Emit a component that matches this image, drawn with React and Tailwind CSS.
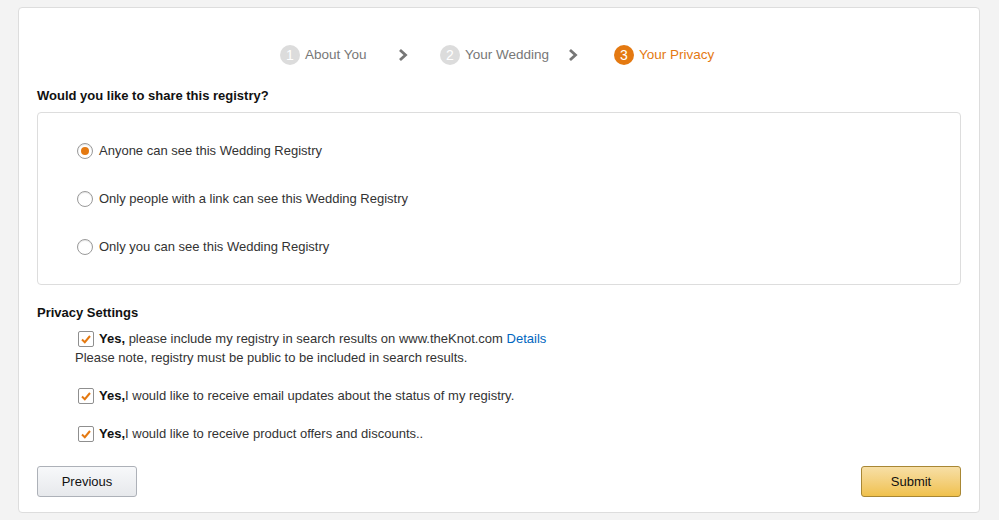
import React from "react";

const font = { fontFamily: '"Liberation Sans", Arial, sans-serif' };

function Chevron() {
  return (
    <svg width="10" height="14" viewBox="0 0 10 14" className="block">
      <polyline points="2,2 7.5,7 2,12" fill="none" stroke="#767676" strokeWidth="2.8" />
    </svg>
  );
}

function Radio({ checked }) {
  return (
    <span className="flex h-[16px] w-[16px] items-center justify-center rounded-full border border-[#9a9a9a] bg-white shadow-[inset_0_1px_1px_rgba(0,0,0,0.1)]">
      {checked && <span className="h-[8px] w-[8px] rounded-full bg-[#e47911]" />}
    </span>
  );
}

function Check() {
  return (
    <span className="flex h-[16px] w-[16px] items-center justify-center rounded-[2px] border border-[#8f8f8f] bg-white">
      <svg width="12" height="12" viewBox="0 0 12 12">
        <polyline points="2,6.5 4.8,9.2 10,3" fill="none" stroke="#e47911" strokeWidth="2" />
      </svg>
    </span>
  );
}

export default function App() {
  return (
    <div className="min-h-[520px] w-[999px] bg-[#f3f3f3] pt-[7px] text-[13px] text-[#333]" style={font}>
      <div className="ml-[18px] h-[506px] w-[962px] rounded-[4px] border border-[#dddddd] bg-white pl-[18px] pr-[18px] pt-[37px]">
        {/* steps */}
        <div className="ml-[243px] flex h-[20px] items-center text-[13.5px]">
          <div className="flex w-[118px] items-center">
            <span className="flex h-[20px] w-[20px] items-center justify-center rounded-full bg-[#dcdcdc] text-[14px] text-white">1</span>
            <span className="ml-[5px] text-[#777]">About You</span>
          </div>
          <Chevron />
          <div className="ml-[32px] flex w-[128px] items-center">
            <span className="flex h-[20px] w-[20px] items-center justify-center rounded-full bg-[#dcdcdc] text-[14px] text-white">2</span>
            <span className="ml-[5px] text-[#777]">Your Wedding</span>
          </div>
          <Chevron />
          <div className="ml-[36px] flex items-center">
            <span className="flex h-[20px] w-[20px] items-center justify-center rounded-full bg-[#e47911] text-[14px] text-white">3</span>
            <span className="ml-[5px] text-[#e47911]">Your Privacy</span>
          </div>
        </div>

        <div className="mt-[23px] text-[13px] font-bold leading-[16px] text-[#111]">Would you like to share this registry?</div>

        <div className="mt-[8px] h-[173px] rounded-[4px] border border-[#dddddd] pl-[39px] pt-[14px]">
          <div className="flex h-[48px] items-center gap-[6px]">
            <Radio checked />
            <span>Anyone can see this Wedding Registry</span>
          </div>
          <div className="flex h-[48px] items-center gap-[6px]">
            <Radio />
            <span>Only people with a link can see this Wedding Registry</span>
          </div>
          <div className="flex h-[48px] items-center gap-[6px]">
            <Radio />
            <span>Only you can see this Wedding Registry</span>
          </div>
        </div>

        <div className="mt-[20px] text-[13px] font-bold leading-[16px] text-[#111]">Privacy Settings</div>

        <div className="mt-[8px] pl-[41px]">
          <div className="flex h-[20px] items-center gap-[5px]">
            <Check />
            <span>
              <b className="text-[#111]">Yes,</b> please include my registry in search results on www.theKnot.com{" "}
              <span className="text-[#0066c0]">Details</span>
            </span>
          </div>
          <div className="-ml-[3px] flex h-[18px] items-center">Please note, registry must be public to be included in search results.</div>
          <div className="mt-[19px] flex h-[20px] items-center gap-[5px]">
            <Check />
            <span>
              <b className="text-[#111]">Yes,</b>I would like to receive email updates about the status of my registry.
            </span>
          </div>
          <div className="mt-[18px] flex h-[20px] items-center gap-[5px]">
            <Check />
            <span>
              <b className="text-[#111]">Yes,</b>I would like to receive product offers and discounts..
            </span>
          </div>
        </div>

        <div className="mt-[22px] flex items-center justify-between">
          <button className="h-[31px] w-[100px] rounded-[3px] border border-[#adb1b8] bg-gradient-to-b from-[#f7f8fa] to-[#e7e9ec] text-[13px] text-[#111]">
            Previous
          </button>
          <button className="h-[31px] w-[100px] rounded-[3px] border border-[#a88734] bg-gradient-to-b from-[#f7dfa5] to-[#f0c14b] text-[13px] text-[#111]">
            Submit
          </button>
        </div>
      </div>
    </div>
  );
}
